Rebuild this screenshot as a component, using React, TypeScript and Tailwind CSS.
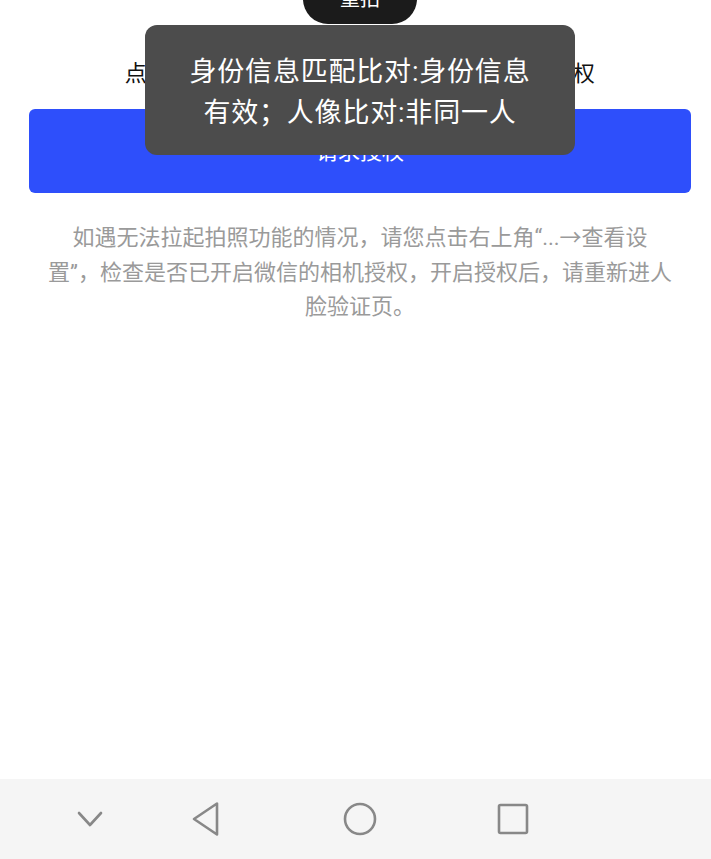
import React from "react";

const font = "font-['Roboto','Noto_Sans_CJK_SC',sans-serif]";

function NavBar() {
  return (
    <div className="h-[80px] bg-[#f5f5f5] flex items-center shrink-0">
      <div className="w-[180px] flex items-center">
        <svg width="26" height="18" viewBox="0 0 26 18" className="ml-[77px]">
          <path d="M2 3 L13 15 L24 3" fill="none" stroke="#888" strokeWidth="2.6" strokeLinecap="round" strokeLinejoin="round" />
        </svg>
      </div>
      <svg width="32" height="36" viewBox="0 0 32 36" className="ml-[10px]">
        <path d="M27 2.5 L27 33.5 L4 18 Z" fill="none" stroke="#888" strokeWidth="2.6" strokeLinejoin="round" />
      </svg>
      <svg width="36" height="36" viewBox="0 0 36 36" className="ml-[120px]">
        <circle cx="18" cy="18" r="15" fill="none" stroke="#888" strokeWidth="2.6" />
      </svg>
      <svg width="34" height="34" viewBox="0 0 34 34" className="ml-[118px]">
        <rect x="3" y="3" width="28" height="28" rx="1.5" fill="none" stroke="#888" strokeWidth="2.6" />
      </svg>
    </div>
  );
}

export default function App() {
  return (
    <div className={`relative h-[859px] w-[711px] overflow-hidden bg-white flex flex-col ${font}`}>
      <div className="flex-1 flex flex-col items-center pl-[9px]">
        {/* 重拍按钮（滚动后只露出下半截） */}
        <div className="mt-[-26px] h-[50px] w-[114px] rounded-full bg-[#1b1b1b] text-white text-[20px] leading-[50px] text-center">
          重拍
        </div>

        <div className="mt-[34px] text-[22px] leading-[32px] text-[#111] tracking-[0.4px]">
          点击下方按钮，允许微信访问你的相机进行授权
        </div>

        <button className="mt-[19px] w-[662px] h-[84px] rounded-[6px] bg-[#2e4ffb] text-white text-[22px]">
          请求授权
        </button>

        <div className="mt-[28px] text-center text-[22px] leading-[34.5px] text-[#9a9a9a]">
          <p className="whitespace-nowrap">如遇无法拉起拍照功能的情况，请您点击右上角“...→查看设</p>
          <p className="whitespace-nowrap">置”，检查是否已开启微信的相机授权，开启授权后，请重新进人</p>
          <p className="whitespace-nowrap">脸验证页。</p>
        </div>
      </div>

      <NavBar />

      {/* toast 提示 */}
      <div className="absolute left-[145px] top-[25px] w-[430px] h-[130px] rounded-[12px] bg-[#4c4c4c] flex items-center justify-center pt-[6px]">
        <div className="text-white text-[27px] leading-[41px] text-center tracking-[0.8px]">
          <p className="whitespace-nowrap">身份信息匹配比对:身份信息</p>
          <p className="whitespace-nowrap">有效；人像比对:非同一人</p>
        </div>
      </div>
    </div>
  );
}
